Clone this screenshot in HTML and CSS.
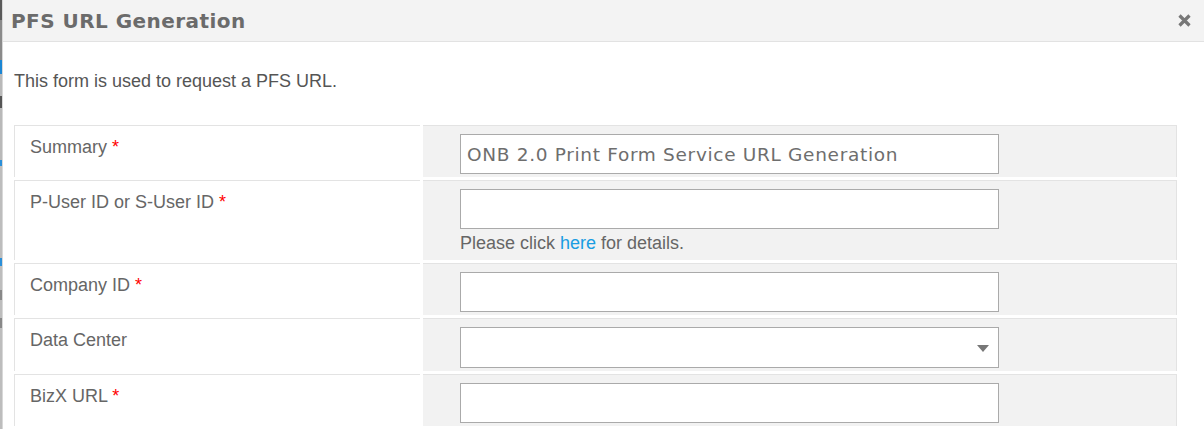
FILE: index.html
```html
<!DOCTYPE html>
<html lang="en">
<head>
<meta charset="utf-8">
<title>PFS URL Generation</title>
<link rel="stylesheet" href="styles.css">
</head>
<body>
<div class="page">
  <div class="backdrop"></div>
  <div class="modal">
    <div class="modal-header">
      <h1 class="modal-title">PFS URL Generation</h1>
      <button class="close" type="button" aria-label="Close">
        <svg width="13" height="13" viewBox="0 0 13 13"><path d="M1.5 1.5 L11.5 11.5 M11.5 1.5 L1.5 11.5" stroke="#777" stroke-width="3.2" stroke-linecap="butt"/></svg>
      </button>
    </div>
    <div class="modal-body">
      <p class="intro">This form is used to request a PFS URL.</p>
      <div class="form-table">
        <div class="label-cell">Summary <span class="req">*</span></div>
        <div class="value-cell"><div class="input">ONB 2.0 Print Form Service URL Generation</div></div>

        <div class="label-cell">P-User ID or S-User ID <span class="req">*</span></div>
        <div class="value-cell tall">
          <div class="input"></div>
          <div class="help">Please click <a href="#">here</a> for details.</div>
        </div>

        <div class="label-cell">Company ID <span class="req">*</span></div>
        <div class="value-cell"><div class="input"></div></div>

        <div class="label-cell">Data Center</div>
        <div class="value-cell"><div class="input select"><span class="caret"></span></div></div>

        <div class="label-cell">BizX URL <span class="req">*</span></div>
        <div class="value-cell"><div class="input"></div></div>
      </div>
    </div>
  </div>
</div>
</body>
</html>
```
FILE: styles.css
```css
* { box-sizing: border-box; }
html, body { margin: 0; padding: 0; background: #fff; }
body {
  font-family: "Liberation Sans", Arial, sans-serif;
  color: #666;
  width: 1204px;
  height: 429px;
  overflow: hidden;
}
.page {
  display: flex;
  height: 429px;
}
.backdrop {
  width: 3px;
  flex: none;
  background: linear-gradient(to bottom,
    #5a5a5a 0, #5a5a5a 20px,
    #8a8a8a 20px, #8a8a8a 60px,
    #1b86d4 60px, #1b86d4 74px,
    #b9b9b9 74px, #b9b9b9 96px,
    #555 96px, #555 108px,
    #b9b9b9 108px, #b9b9b9 160px,
    #2b8fd8 160px, #2b8fd8 166px,
    #bdbdbd 166px, #bdbdbd 258px,
    #2b8fd8 258px, #2b8fd8 266px,
    #bdbdbd 266px, #bdbdbd 290px,
    #888 290px, #888 300px,
    #bdbdbd 300px, #bdbdbd 318px,
    #888 318px, #888 328px,
    #bdbdbd 328px);
  border-right: 1px solid #d8d8d8;
}
.modal {
  flex: 1;
  display: flex;
  flex-direction: column;
}
.modal-header {
  height: 42px;
  background: #f3f3f3;
  border-bottom: 1px solid #e2e2e2;
  display: flex;
  align-items: center;
  justify-content: space-between;
  padding: 0 13px 0 8px;
}
.modal-title {
  margin: 0;
  font-family: "DejaVu Sans", Verdana, sans-serif;
  font-weight: bold;
  font-size: 20px;
  color: #6b6b6b;
  letter-spacing: 0.45px;
}
.close {
  border: 0;
  background: none;
  padding: 0;
  width: 13px;
  height: 13px;
  display: flex;
  cursor: pointer;
}
.modal-body {
  padding: 0 27px 0 11px;
}
.intro {
  margin: 30px 0 35px;
  font-size: 18px;
  line-height: 18px;
  color: #555;
}
.form-table {
  display: grid;
  grid-template-columns: 406px 754px;
  column-gap: 3px;
  row-gap: 3px;
}
.label-cell {
  background: #fff;
  border-top: 1px solid #e3e3e3;
  border-left: 1px solid #e3e3e3;
  padding: 12px 15px 0;
  font-size: 18px;
  line-height: 18px;
  color: #666;
}
.req { color: #f00; }
.value-cell {
  background: #f2f2f2;
  border-top: 1px solid #e3e3e3;
  border-right: 1px solid #e3e3e3;
  padding: 8px 0 3px 37px;
}
.value-cell.tall { padding-bottom: 8px; }
.input {
  width: 539px;
  height: 40px;
  background: #fff;
  border: 1px solid #aaa;
  padding: 0 6px;
  display: flex;
  align-items: center;
  font-family: "DejaVu Sans", Verdana, sans-serif;
  font-size: 18.5px;
  color: #6e6e6e;
  letter-spacing: 0.68px;
}
.input.select {
  height: 41px;
  justify-content: flex-end;
  padding-right: 9px;
}
.caret {
  width: 0;
  height: 0;
  border-left: 6px solid transparent;
  border-right: 6px solid transparent;
  border-top: 7px solid #777;
  margin-top: 1px;
}
.help {
  margin-top: 5px;
  font-size: 18px;
  line-height: 18px;
  color: #666;
}
.help a {
  color: #1a9de2;
  text-decoration: none;
}
```
